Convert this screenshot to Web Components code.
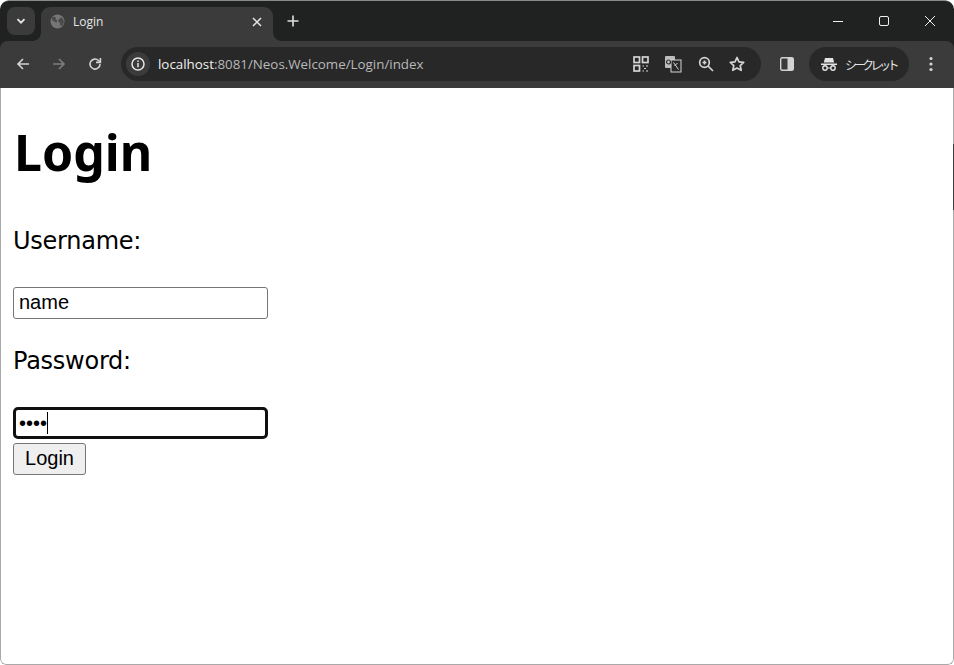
<!DOCTYPE html>
<html lang="en">
<head>
<meta charset="utf-8">
<title>Login</title>
<style>
  html, body { margin: 0; height: 100%; background: #fff; }
  body { font-family: "Liberation Sans", sans-serif; }
</style>
</head>
<body>
<browser-window>
  <browser-tabstrip slot="chrome" title="Login"></browser-tabstrip>
  <browser-toolbar slot="chrome" host="localhost" path=":8081/Neos.Welcome/Login/index"></browser-toolbar>
  <login-page></login-page>
</browser-window>

<script>
class BrowserWindow extends HTMLElement {
  constructor() {
    super();
    this.attachShadow({ mode: "open" });
    this.shadowRoot.innerHTML = `
      <style>
        :host {
          display: flex;
          flex-direction: column;
          box-sizing: border-box;
          width: 954px;
          height: 665px;
          overflow: hidden;
          background: #fff;
          border-radius: 9px 9px 6px 6px;
        }
        .chrome { flex: none; }
        .page {
          flex: 1;
          position: relative;
          border: 1px solid #a9a9a9;
          border-top: 0;
          border-radius: 0 0 6px 6px;
        }
        .edge {
          position: absolute;
          right: -1px;
          top: 56px;
          width: 1px;
          height: 66px;
          background: #3c3c3c;
        }
      </style>
      <div class="chrome"><slot name="chrome"></slot></div>
      <div class="page"><slot></slot><div class="edge"></div></div>
    `;
  }
}

class BrowserTabstrip extends HTMLElement {
  constructor() {
    super();
    this.attachShadow({ mode: "open" });
    const title = this.getAttribute("title") || "";
    this.shadowRoot.innerHTML = `
      <style>
        :host {
          display: flex;
          height: 41px;
          background: #202221;
          color: #e6e6e6;
          font: 12px "Open Sans", "Liberation Sans", sans-serif;
          box-sizing: border-box;
          padding: 6px 0 0 7px;
          border-top: 1px solid #8a8a8a;
          border-radius: 9px 9px 0 0;
        }
        svg { display: block; }
        .menu {
          width: 28px;
          height: 28px;
          border-radius: 8px;
          background: #3b3b3b;
          display: grid;
          place-items: center;
          flex: none;
        }
        .tab {
          position: relative;
          width: 232px;
          height: 34px;
          margin-left: 6px;
          background: #3b3b3b;
          border-radius: 9px 9px 0 0;
          display: flex;
          align-items: center;
          box-sizing: border-box;
          padding: 0 10px 5px 9px;
          flex: none;
        }
        .tab::before, .tab::after {
          content: "";
          position: absolute;
          bottom: 0;
          width: 8px;
          height: 8px;
        }
        .tab::before { left: -8px; background: radial-gradient(circle at 0 0, transparent 7.5px, #3b3b3b 8px); }
        .tab::after { right: -8px; background: radial-gradient(circle at 100% 0, transparent 7.5px, #3b3b3b 8px); }
        .title { flex: 1; margin-left: 8px; font-size: 12px; }
        .new { margin-left: 13px; height: 28px; display: grid; place-items: center; }
        .controls {
          margin-left: auto;
          display: flex;
          align-items: center;
          height: 28px;
          padding-right: 18px;
          gap: 35.5px;
        }
      </style>
      <div class="menu">
        <svg width="12" height="12" viewBox="0 0 12 12" fill="none" stroke="#e6e6e6" stroke-width="1.8"><path d="M2.5 4.2 6 7.7l3.5-3.5"/></svg>
      </div>
      <div class="tab">
        <svg width="15" height="15" viewBox="0 0 15 15"><circle cx="7.5" cy="7.5" r="7" fill="#757575"/><path d="M2 3.5c1.500-1 3-.8 4 .2l-.5 1.600 1.800 1.200-.6 2L5 8 2 6Zm7 1.800 2.500-2 2 2.600.3 2.500-1.300 3-2 .8-.5-3.200L8 7Z" fill="#4a4a4a"/></svg>
        <span class="title">${title}</span>
        <svg width="12" height="12" viewBox="0 0 12 12" stroke="#e6e6e6" stroke-width="1.500"><path d="m2 2 8 8M10 2l-8 8"/></svg>
      </div>
      <div class="new">
        <svg width="14" height="14" viewBox="0 0 14 14" stroke="#e0e0e0" stroke-width="1.600"><path d="M7 1.500v11M1.500 7h11"/></svg>
      </div>
      <div class="controls">
        <svg width="10" height="10" viewBox="0 0 10 10" stroke="#f0f0f0" stroke-width="1"><path d="M0 5.500h10"/></svg>
        <svg width="10" height="10" viewBox="0 0 10 10" fill="none" stroke="#f0f0f0" stroke-width="1"><rect x=".5" y=".5" width="9" height="9" rx="1.500"/></svg>
        <svg width="12" height="12" viewBox="0 0 12 12" stroke="#f0f0f0" stroke-width="1"><path d="m1 1 10 10M11 1 1 11"/></svg>
      </div>
    `;
  }
}

class BrowserToolbar extends HTMLElement {
  constructor() {
    super();
    this.attachShadow({ mode: "open" });
    const host = this.getAttribute("host");
    const path = this.getAttribute("path");
    this.shadowRoot.innerHTML = `
      <style>
        :host {
          display: flex;
          align-items: center;
          height: 47px;
          box-sizing: border-box;
          background: linear-gradient(#202221 8px, #3b3b3b 8px);
          padding: 0 0 1px 16px;
          color: #d9d9d9;
          font: 13.35px "Open Sans", "Liberation Sans", sans-serif;
          position: relative;
          isolation: isolate;
        }
        :host::before {
          content: "";
          position: absolute;
          inset: 0;
          z-index: -1;
          background: #3b3b3b;
          border-radius: 8px 8px 0 0;
        }
        svg { display: block; flex: none; }
        .nav { display: flex; align-items: center; gap: 22px; }
        .omnibox {
          margin-left: 19px;
          width: 640px;
          height: 34px;
          box-sizing: border-box;
          border-radius: 17px;
          background: #282828;
          display: flex;
          align-items: center;
          padding: 0 16px 0 5px;
          flex: none;
        }
        .info {
          width: 24px;
          height: 24px;
          border-radius: 50%;
          background: #3b3b3b;
          display: grid;
          place-items: center;
          flex: none;
        }
        .url { margin-left: 8px; flex: 1; white-space: nowrap; color: #b9b9b9; }
        .url b { font-weight: 400; color: #f0f0f0; }
        .actions { display: flex; align-items: center; gap: 15.5px; }
        .panel { margin-left: 19px; }
        .profile {
          margin-left: 15px;
          width: 100px;
          height: 34px;
          box-sizing: border-box;
          padding-left: 12px;
          border-radius: 17px;
          background: #282828;
          display: flex;
          align-items: center;
          gap: 8px;
          color: #e4e4e4;
          font: 12px "Noto Sans CJK JP", sans-serif;
          letter-spacing: -3.5px;
          flex: none;
        }
        .more { margin-left: 20px; }
      </style>
      <div class="nav">
        <svg width="14" height="14" viewBox="0 0 14 14" fill="none" stroke="#d4d4d4" stroke-width="1.600"><path d="M13 7H2M7 2 2 7l5 5"/></svg>
        <svg width="14" height="14" viewBox="0 0 14 14" fill="none" stroke="#7d7d7d" stroke-width="1.600"><path d="M1 7h11M7 2l5 5-5 5"/></svg>
        <svg width="14" height="14" viewBox="0 0 14 14" fill="none" stroke="#d4d4d4" stroke-width="1.600"><path d="M12 7a5 5 0 1 1-1.500-3.500L12 5"/><path d="M12.400 1v4.400H8" /></svg>
      </div>
      <div class="omnibox">
        <div class="info">
          <svg width="14" height="14" viewBox="0 0 14 14"><circle cx="7" cy="7" r="6" fill="none" stroke="#e6e6e6" stroke-width="1.500"/><path d="M7 6v4.200M7 3.600v1.400" stroke="#e6e6e6" stroke-width="1.500"/></svg>
        </div>
        <div class="url"><b>${host}</b>${path}</div>
        <div class="actions">
          <svg width="16" height="16" viewBox="0 0 16 16" fill="none" stroke="#d4d4d4" stroke-width="1.700"><rect x="1" y="1" width="5.500" height="5.500"/><rect x="9.500" y="1" width="5.500" height="5.500"/><rect x="1" y="9.500" width="5.500" height="5.500"/><path d="M9.500 10h1.500M13 10h2M11 12.500h2M9.500 15h1.500M13 15h2" stroke-width="1.200"/></svg>
          <svg width="18" height="18" viewBox="0 0 18 18" fill="none"><rect x="1" y="1" width="10" height="12" rx="1" fill="#bdbdbd"/><rect x="7" y="5" width="10" height="12" fill="#282828" stroke="#d4d4d4"/><path d="m9.500 7.500 5 7M13.500 8l-3 3" stroke="#d4d4d4"/><circle cx="4.500" cy="7" r="2" stroke="#333" stroke-width="1.200"/></svg>
          <svg width="16" height="16" viewBox="0 0 16 16" fill="none" stroke="#d4d4d4" stroke-width="1.700"><circle cx="6.500" cy="6.500" r="4.800"/><path d="m10 10 5 5M4.500 6.500h4M6.500 4.500v4"/></svg>
          <svg width="16" height="16" viewBox="0 0 16 16" fill="none" stroke="#d4d4d4" stroke-width="1.700" stroke-linejoin="round"><path d="m8 1.500 2 4.400 4.700.5-3.500 3.200 1 4.700L8 12l-4.200 2.300 1-4.700L1.300 6.400 6 5.900Z"/></svg>
        </div>
      </div>
      <svg class="panel" width="14" height="14" viewBox="0 0 14 14"><rect x=".7" y=".7" width="12.600" height="12.600" rx="1.500" fill="none" stroke="#d4d4d4" stroke-width="1.400"/><rect x="7.500" y="1" width="5.500" height="12" fill="#d4d4d4"/></svg>
      <div class="profile">
        <svg width="16" height="14" viewBox="0 0 16 14" fill="#e4e4e4"><path d="M4 1h8l1.200 4.500H2.800Z"/><path d="M0 6.500h16V8H0Z"/><circle cx="4" cy="11" r="2.200" fill="none" stroke="#e4e4e4" stroke-width="1.400"/><circle cx="12" cy="11" r="2.200" fill="none" stroke="#e4e4e4" stroke-width="1.400"/><path d="M6 10.500h4v1H6Z"/></svg>
        <span>シークレット</span>
      </div>
      <svg class="more" width="4" height="16" viewBox="0 0 4 16" fill="#d4d4d4"><circle cx="2" cy="2.500" r="1.600"/><circle cx="2" cy="8" r="1.600"/><circle cx="2" cy="13.500" r="1.600"/></svg>
    `;
  }
}

class LoginPage extends HTMLElement {
  constructor() {
    super();
    this.attachShadow({ mode: "open" });
    this.shadowRoot.innerHTML = `
      <style>
        :host {
          display: block;
          padding: 0 12px;
          color: #000;
          font-family: "DejaVu Sans", sans-serif;
        }
        h1 {
          margin: 0;
          padding: 35px 0 0 1px;
          font-family: "Noto Sans", sans-serif;
          font-size: 50px;
          line-height: 58px;
          font-weight: 700;
        }
        form { display: flex; flex-direction: column; align-items: flex-start; }
        label {
          display: block;
          font-size: 24px;
          letter-spacing: -0.25px;
          line-height: 28px;
          margin: 28px 0 32px;
        }
        label.first { margin-top: 46px; }
        input {
          box-sizing: border-box;
          width: 255px;
          height: 32px;
          margin: 0;
          padding: 0 5px 2px;
          border: 1px solid #767676;
          border-radius: 3px;
          font: 20px "Liberation Sans", sans-serif;
          color: #000;
          background: #fff;
          outline: none;
        }
        .pw-row { position: relative; }
        .focused {
          border: 3px solid #101010;
          border-radius: 5px;
          padding: 0 3px;
        }
        .caret {
          position: absolute;
          left: 34px;
          top: 5px;
          width: 1px;
          height: 22px;
          background: #000;
        }
        button {
          box-sizing: border-box;
          width: 73px;
          height: 32px;
          margin: 4px 0 0;
          padding: 0 0 2px;
          border: 1px solid #767676;
          border-radius: 3px;
          background: #efefef;
          color: #000;
          font: 20px "Liberation Sans", sans-serif;
        }
      </style>
      <h1>Login</h1>
      <form>
        <label class="first">Username:</label>
        <input type="text" value="name">
        <label>Password:</label>
        <div class="pw-row">
          <input class="focused" type="password" value="name">
          <div class="caret"></div>
        </div>
        <button type="button">Login</button>
      </form>
    `;
  }
}

customElements.define("browser-window", BrowserWindow);
customElements.define("browser-tabstrip", BrowserTabstrip);
customElements.define("browser-toolbar", BrowserToolbar);
customElements.define("login-page", LoginPage);
</script>
</body>
</html>
